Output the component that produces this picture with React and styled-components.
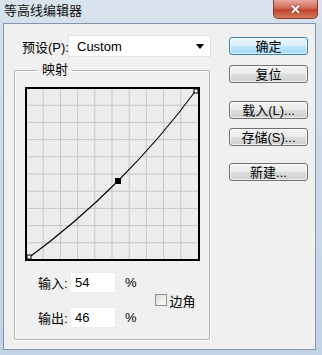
import styled, { createGlobalStyle } from 'styled-components'

const GlobalStyle = createGlobalStyle`
  html, body {
    margin: 0;
    padding: 0;
    background: #fff;
  }
  body {
    font-family: 'Liberation Sans', 'Noto Sans CJK SC', sans-serif;
    font-size: 13px;
    color: #000;
  }
`

const FONT = `'Liberation Sans', 'Noto Sans CJK SC', sans-serif`

const Window = styled.div`
  width: 322px;
  height: 355px;
  box-sizing: border-box;
  display: flex;
  flex-direction: column;
  background: linear-gradient(#dbe4ee 0px, #d3dfeb 30px, #c3d3e5 100%);
  padding: 0 6px 5px 3px;
`

const TitleBar = styled.div`
  height: 23px;
  display: flex;
  align-items: flex-start;
  justify-content: space-between;
`

const Title = styled.div`
  font-size: 13px;
  line-height: 22px;
  padding-left: 1px;
  color: #111;
`

const CloseButton = styled.div`
  width: 45px;
  height: 19px;
  margin-right: -2px;
  box-sizing: border-box;
  border: 1px solid #8a3b35;
  border-top: none;
  border-radius: 0 0 5px 5px;
  background: linear-gradient(#e9a99b, #d0695a 45%, #c0432f 55%, #d47a5c);
  display: flex;
  align-items: center;
  justify-content: center;
  color: #fff;
  font-weight: bold;
  font-size: 13px;
  text-shadow: 0 0 2px #6a1a10;
`

const Client = styled.div`
  flex: 1;
  display: flex;
  background: #f0f0f0;
  border: 1px solid #8496ad;
  padding: 11px 0 0 10px;
  box-sizing: border-box;
`

const LeftCol = styled.div`
  width: 197px;
  display: flex;
  flex-direction: column;
`

const PresetRow = styled.div`
  display: flex;
  align-items: center;
  height: 22px;
  padding-left: 8px;
`

const Label = styled.span`
  width: ${p => p.$w}px;
  flex-shrink: 0;
  font-size: 13px;
  white-space: nowrap;
`

const Select = styled.div`
  width: 143px;
  height: 22px;
  box-sizing: border-box;
  background: #fff;
  border: 1px solid #e2e2e2;
  display: flex;
  align-items: center;
  justify-content: space-between;
  padding: 0 6px 0 8px;
  font-size: 13px;
`

const Arrow = styled.span`
  width: 0;
  height: 0;
  border-left: 4px solid transparent;
  border-right: 4px solid transparent;
  border-top: 5px solid #000;
`

const Group = styled.fieldset`
  margin: 5px 0 0 0;
  padding: 0 0 11px 10px;
  border: 1px solid #b4b4b4;
  box-shadow: inset 1px 1px 0 #fff, 1px 1px 0 #fff;
  border-radius: 2px;
  width: 196px;
  box-sizing: border-box;
`

const Legend = styled.legend`
  margin-left: 13px;
  padding: 0 4px;
  font-size: 13px;
  line-height: 16px;
`

const Graph = styled.svg`
  display: block;
  margin-top: 9px;
  width: 175px;
  height: 174px;
`

const Fields = styled.div`
  display: flex;
  align-items: center;
  margin-top: 11px;
`

const FieldCol = styled.div`
  display: flex;
  flex-direction: column;
  gap: 14px;
`

const FieldRow = styled.div`
  display: flex;
  align-items: center;
  padding-left: 13px;
`

const NumInput = styled.div`
  width: 46px;
  height: 21px;
  box-sizing: border-box;
  background: #fff;
  border: 1px solid #ececec;
  padding-left: 4px;
  display: flex;
  align-items: center;
  font-size: 13px;
`

const Percent = styled.span`
  margin-left: 9px;
  font-size: 13px;
`

const CheckWrap = styled.label`
  display: flex;
  align-items: center;
  margin-left: 18px;
  margin-top: 0px;
  font-size: 13px;
`

const Check = styled.span`
  width: 12px;
  height: 12px;
  box-sizing: border-box;
  border: 1px solid #8f8f8f;
  background: linear-gradient(135deg, #dcdcdc, #fafafa);
  margin-right: 3px;
`

const ButtonCol = styled.div`
  display: flex;
  flex-direction: column;
  margin-left: 18px;
  padding-top: 1px;
`

const Button = styled.div`
  width: 79px;
  height: 18px;
  box-sizing: border-box;
  margin-top: ${p => p.$gap}px;
  border: 1px solid ${p => (p.$primary ? '#3c7fb1' : '#707070')};
  border-radius: 3px;
  background: ${p =>
    p.$primary
      ? 'linear-gradient(#eaf6fd, #d9f0fc 50%, #bee6fd 50%, #a7d9f5)'
      : 'linear-gradient(#f2f2f2, #ebebeb 50%, #dddddd 50%, #cfcfcf)'};
  box-shadow: inset 0 0 0 1px rgba(255, 255, 255, 0.7);
  display: flex;
  align-items: center;
  justify-content: center;
  font-family: ${FONT};
  font-size: 13px;
  line-height: 1;
`

const grid = Array.from({ length: 9 }, (_, i) => (i + 1) * 17.2)

const CurveGraph = () => (
  <Graph viewBox="0 0 175 174">
    <rect x="0" y="0" width="175" height="174" fill="#ececec" />
    {grid.map(v => (
      <g key={v}>
        <line x1={1 + v} y1="1" x2={1 + v} y2="173" stroke="#c6c6c6" strokeWidth="1" />
        <line x1="1" y1={1 + v} x2="174" y2={1 + v} stroke="#c6c6c6" strokeWidth="1" />
      </g>
    ))}
    <rect x="1" y="1" width="173" height="172" fill="none" stroke="#000" strokeWidth="2" />
    <path
      d="M2,172 C32,150 63,124 93,94 C120,67 147,36 172,2"
      fill="none"
      stroke="#000"
      strokeWidth="1.1"
    />
    <rect x="90" y="91" width="6" height="6" fill="#000" />
    <rect x="2" y="168" width="4" height="4" fill="#fff" stroke="#000" strokeWidth="1" />
    <rect x="169" y="2" width="4" height="4" fill="#fff" stroke="#000" strokeWidth="1" />
  </Graph>
)

const App = () => (
  <>
    <GlobalStyle />
    <Window>
      <TitleBar>
        <Title>等高线编辑器</Title>
        <CloseButton>✕</CloseButton>
      </TitleBar>
      <Client>
        <LeftCol>
          <PresetRow>
            <Label $w={46}>预设(P):</Label>
            <Select>
              <span>Custom</span>
              <Arrow />
            </Select>
          </PresetRow>
          <Group>
            <Legend>映射</Legend>
            <CurveGraph />
            <Fields>
              <FieldCol>
                <FieldRow>
                  <Label $w={32}>输入:</Label>
                  <NumInput>54</NumInput>
                  <Percent>%</Percent>
                </FieldRow>
                <FieldRow>
                  <Label $w={32}>输出:</Label>
                  <NumInput>46</NumInput>
                  <Percent>%</Percent>
                </FieldRow>
              </FieldCol>
              <CheckWrap>
                <Check />
                边角
              </CheckWrap>
            </Fields>
          </Group>
        </LeftCol>
        <ButtonCol>
          <Button $primary $gap={1}>确定</Button>
          <Button $gap={10}>复位</Button>
          <Button $gap={18}>载入(L)...</Button>
          <Button $gap={9}>存储(S)...</Button>
          <Button $gap={17}>新建...</Button>
        </ButtonCol>
      </Client>
    </Window>
  </>
)

export default App
